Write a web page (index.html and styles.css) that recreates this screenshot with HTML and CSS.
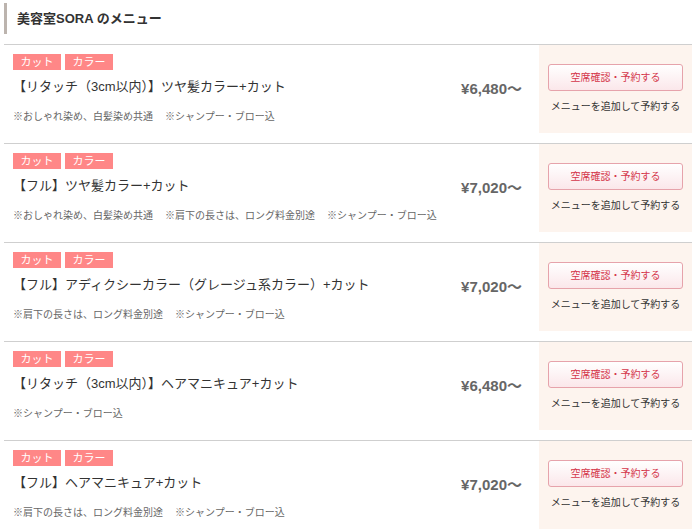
FILE: index.html
```html
<!DOCTYPE html>
<html lang="ja">
<head>
<meta charset="utf-8">
<title>美容室SORA のメニュー</title>
<link rel="stylesheet" href="styles.css">
</head>
<body>
<div class="menu">
  <div class="menu-head"><h2 class="menu-title">美容室SORA のメニュー</h2></div>

  <div class="row">
    <div class="info">
      <div class="tags"><span class="tag">カット</span><span class="tag">カラー</span></div>
      <p class="name">【リタッチ（3cm以内）】ツヤ髪カラー+カット</p>
      <p class="note"><span>※おしゃれ染め、白髪染め共通</span><span>※シャンプー・ブロー込</span></p>
    </div>
    <div class="price">¥6,480～</div>
    <div class="action">
      <a class="btn">空席確認・予約する</a>
      <a class="add">メニューを追加して予約する</a>
    </div>
  </div>

  <div class="row">
    <div class="info">
      <div class="tags"><span class="tag">カット</span><span class="tag">カラー</span></div>
      <p class="name">【フル】ツヤ髪カラー+カット</p>
      <p class="note"><span>※おしゃれ染め、白髪染め共通</span><span>※肩下の長さは、ロング料金別途</span><span>※シャンプー・ブロー込</span></p>
    </div>
    <div class="price">¥7,020～</div>
    <div class="action">
      <a class="btn">空席確認・予約する</a>
      <a class="add">メニューを追加して予約する</a>
    </div>
  </div>

  <div class="row">
    <div class="info">
      <div class="tags"><span class="tag">カット</span><span class="tag">カラー</span></div>
      <p class="name">【フル】アディクシーカラー（グレージュ系カラー）+カット</p>
      <p class="note"><span>※肩下の長さは、ロング料金別途</span><span>※シャンプー・ブロー込</span></p>
    </div>
    <div class="price">¥7,020～</div>
    <div class="action">
      <a class="btn">空席確認・予約する</a>
      <a class="add">メニューを追加して予約する</a>
    </div>
  </div>

  <div class="row">
    <div class="info">
      <div class="tags"><span class="tag">カット</span><span class="tag">カラー</span></div>
      <p class="name">【リタッチ（3cm以内）】ヘアマニキュア+カット</p>
      <p class="note"><span>※シャンプー・ブロー込</span></p>
    </div>
    <div class="price">¥6,480～</div>
    <div class="action">
      <a class="btn">空席確認・予約する</a>
      <a class="add">メニューを追加して予約する</a>
    </div>
  </div>

  <div class="row">
    <div class="info">
      <div class="tags"><span class="tag">カット</span><span class="tag">カラー</span></div>
      <p class="name">【フル】ヘアマニキュア+カット</p>
      <p class="note"><span>※肩下の長さは、ロング料金別途</span><span>※シャンプー・ブロー込</span></p>
    </div>
    <div class="price">¥7,020～</div>
    <div class="action">
      <a class="btn">空席確認・予約する</a>
      <a class="add">メニューを追加して予約する</a>
    </div>
  </div>
</div>
</body>
</html>
```

FILE: styles.css
```css
* { box-sizing: border-box; }
html, body { margin: 0; padding: 0; background: #fff; }
body {
  font-family: "Liberation Sans", "Noto Sans CJK JP", sans-serif;
  color: #333;
}
.menu {
  width: 688px;
  margin-left: 4px;
}
.menu-head {
  height: 44px;
  padding-top: 3px;
}
.menu-title {
  margin: 0;
  height: 31px;
  border-left: 3px solid #bcb4ae;
  padding-left: 10px;
  font-size: 13px;
  font-weight: bold;
  line-height: 31px;
  color: #333;
}
.row {
  display: flex;
  height: 99px;
  border-top: 1px solid #cfcfcf;
}
.info {
  flex: 1;
  padding: 9px 0 0 9px;
  min-width: 0;
}
.tags {
  display: flex;
  gap: 4px;
}
.tag {
  display: block;
  width: 48px;
  height: 16px;
  background: #ff8787;
  color: #fff;
  font-size: 11px;
  line-height: 16px;
  text-align: center;
}
.name {
  margin: 7px 0 0;
  font-size: 13px;
  line-height: 20px;
  color: #333;
}
.note {
  margin: 13px 0 0;
  font-size: 10px;
  line-height: 14px;
  color: #666;
  display: flex;
  gap: 12px;
}
.price {
  padding-top: 34px;
  margin-right: 17px;
  font-size: 15px;
  font-weight: bold;
  line-height: 20px;
  color: #666;
  white-space: nowrap;
}
.action {
  width: 153px;
  height: 88px;
  background: #fdf4ee;
  padding: 19px 9px 0;
  display: flex;
  flex-direction: column;
  align-items: center;
}
.btn {
  display: block;
  width: 135px;
  height: 27px;
  border: 1px solid #e6a3ab;
  border-radius: 3px;
  background: linear-gradient(#fff, #fbe7ea);
  color: #d4364a;
  font-size: 10px;
  line-height: 25px;
  text-align: center;
}
.add {
  display: block;
  margin-top: 9px;
  font-size: 10px;
  line-height: 14px;
  color: #333;
  text-align: center;
}
```
